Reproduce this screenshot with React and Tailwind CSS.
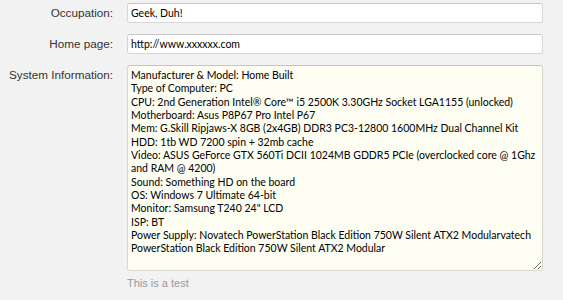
import React from "react";

const info = `Manufacturer & Model: Home Built
Type of Computer: PC
CPU: 2nd Generation Intel® Core™ i5 2500K 3.30GHz Socket LGA1155 (unlocked)
Motherboard: Asus P8P67 Pro Intel P67
Mem: G.Skill Ripjaws-X 8GB (2x4GB) DDR3 PC3-12800 1600MHz Dual Channel Kit
HDD: 1tb WD 7200 spin + 32mb cache
Video: ASUS GeForce GTX 560Ti DCII 1024MB GDDR5 PCIe (overclocked core @ 1Ghz
and RAM @ 4200)
Sound: Something HD on the board
OS: Windows 7 Ultimate 64-bit
Monitor: Samsung T240 24" LCD
ISP: BT
Power Supply: Novatech PowerStation Black Edition 750W Silent ATX2 Modularvatech
PowerStation Black Edition 750W Silent ATX2 Modular`;

const labelCls =
  "text-right text-[11.7px] text-[#333] font-['Liberation_Sans',Arial,sans-serif] leading-[20px]";
const fieldFont = "font-['Lato','Noto_Sans',sans-serif] text-[10.5px] text-black";

export default function App() {
  return (
    <div className="w-[563px] h-[300px] bg-[#f2f2f2] pt-[3px] overflow-hidden">
      <div className="grid grid-cols-[113px_416px] gap-x-[14px] gap-y-[11px]">
        <label className={labelCls}>Occupation:</label>
        <input
          readOnly
          defaultValue="Geek, Duh!"
          className={`h-[20px] w-full rounded-[3px] border border-[#d6d6d6] border-t-[#c4c4c4] bg-white px-[3px] outline-none ${fieldFont}`}
        />
        <label className={labelCls}>Home page:</label>
        <input
          readOnly
          defaultValue="http://www.xxxxxx.com"
          className={`h-[20px] w-full rounded-[3px] border border-[#d6d6d6] border-t-[#c4c4c4] bg-white px-[3px] outline-none ${fieldFont}`}
        />
        <label className={labelCls}>System Information:</label>
        <div className="flex flex-col">
          <textarea
            readOnly
            wrap="off"
            defaultValue={info}
            className={`h-[206px] w-full resize overflow-hidden whitespace-pre rounded-[3px] border border-[#d6d6d6] border-t-[#c4c4c4] bg-[#fefef2] px-[3px] pt-[3px] leading-[13.33px] outline-none ${fieldFont}`}
          />
          <div className="mt-[6px] text-[11px] leading-[13px] text-[#999] font-['Liberation_Sans',Arial,sans-serif]">
            This is a test
          </div>
        </div>
      </div>
    </div>
  );
}
